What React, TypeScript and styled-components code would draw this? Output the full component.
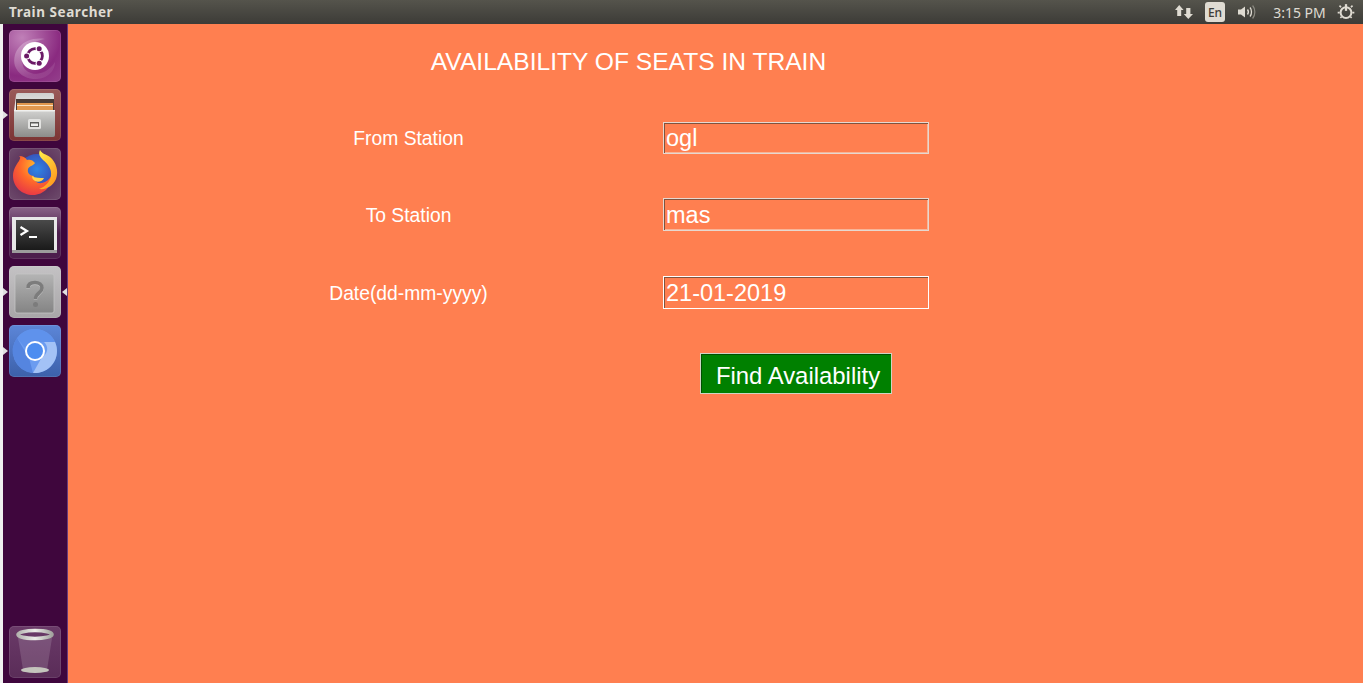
import styled, { createGlobalStyle } from "styled-components";
import type { ReactNode } from "react";

const GlobalStyle = createGlobalStyle`
  html, body {
    margin: 0;
    padding: 0;
    height: 100%;
    overflow: hidden;
    background: #ff7f50;
  }
  * { box-sizing: border-box; }
`;

const Screen = styled.div`
  width: 1363px;
  height: 683px;
  display: flex;
  flex-direction: column;
  font-family: "Liberation Sans", Arial, sans-serif;
`;

const TopBar = styled.header`
  height: 24px;
  flex: none;
  display: flex;
  align-items: center;
  justify-content: space-between;
  padding: 0 6px 0 9px;
  background: linear-gradient(#55544c, #3c3b37);
  color: #dfdbd2;
  font-family: "Noto Sans", "Open Sans", sans-serif;
`;

const WindowTitle = styled.span`
  font-size: 13.5px;
  font-weight: 700;
  letter-spacing: 0.55px;
`;

const Indicators = styled.div`
  display: flex;
  align-items: center;
`;

const Indicator = styled.span<{ $w: number }>`
  width: ${({ $w }) => $w}px;
  height: 24px;
  display: flex;
  align-items: center;
  justify-content: center;
  font-size: 14px;
`;

const LangBadge = styled.span`
  width: 20px;
  height: 20px;
  border-radius: 3px;
  background: #dfdbd2;
  color: #3c3b37;
  font-size: 12px;
  font-weight: 500;
  display: flex;
  align-items: center;
  justify-content: center;
`;

const Body = styled.div`
  flex: 1;
  display: flex;
  min-height: 0;
`;

const Edge = styled.div`
  width: 3px;
  background: #f0f0f0;
`;

const Launcher = styled.nav`
  width: 65px;
  background: #3f063d;
  border-right: 1px solid #6a3a7a;
  padding: 6px 6px 5px;
  display: flex;
  flex-direction: column;
  gap: 7px;
`;

const Tile = styled.div<{ $bg: string }>`
  position: relative;
  width: 52px;
  height: 52px;
  flex: none;
  border-radius: 5px;
  background: ${({ $bg }) => $bg};
  box-shadow: inset 0 0 0 1px rgba(255, 255, 255, 0.1);
  display: flex;
  align-items: center;
  justify-content: center;
`;

const BottomTile = styled(Tile)`
  margin-top: auto;
`;

const PipLeft = styled.i`
  position: absolute;
  left: -6px;
  top: 22px;
  border-style: solid;
  border-width: 4px 0 4px 5px;
  border-color: transparent transparent transparent #e0e0e0;
`;

const PipRight = styled.i`
  position: absolute;
  right: -6px;
  top: 22px;
  border-style: solid;
  border-width: 4px 5px 4px 0;
  border-color: transparent #e0e0e0 transparent transparent;
`;

const Main = styled.main`
  flex: 1;
  background: #ff7f50;
  padding: 0 0 0 85px;
  color: #fff;
`;

const Heading = styled.h1`
  width: 950px;
  margin: 0;
  padding: 24px 0 0 1px;
  height: 98px;
  font-size: 24.6px;
  line-height: 28px;
  font-weight: 400;
  text-align: center;
`;

const Form = styled.form`
  width: 950px;
  display: grid;
  grid-template-columns: 510px 266px;
  align-items: center;
`;

const FieldLabel = styled.label<{ $gap: number; $top: number }>`
  font-size: 19.3px;
  text-align: center;
  padding: ${({ $top }) => $top}px 0 0 1px;
  margin-bottom: ${({ $gap }) => $gap}px;
`;

const FieldInput = styled.input<{ $gap: number; $h: number; $active?: boolean }>`
  width: 266px;
  height: ${({ $h }) => $h}px;
  padding: ${({ $h }) => ($h > 32 ? "3px 2px 1px" : "1px 2px")};
  margin-bottom: ${({ $gap }) => $gap}px;
  font: 23.5px "Liberation Sans", Arial, sans-serif;
  color: #fff;
  background: transparent;
  border: 1px solid ${({ $active }) => ($active ? "#fff" : "#e6d8d0")};
  box-shadow: inset 1px 1px 0 #80533e,
    inset -1px -1px 0 ${({ $active }) => ($active ? "#ff7f50" : "#f8b497")};
  outline: none;
`;

const SubmitCell = styled.div`
  grid-column: 2;
  display: flex;
  justify-content: center;
`;

const SubmitButton = styled.button`
  width: 192px;
  height: 41px;
  padding: 4px 0 0 4px;
  font: 23.9px "Liberation Sans", Arial, sans-serif;
  color: #fff;
  background: #008000;
  border: 1px solid #cfd4c4;
  box-shadow: inset 1px 1px 0 #005000;
`;

const UbuntuIcon = () => (
  <svg width="52" height="52" viewBox="0 0 52 52">
    <defs>
      <linearGradient id="ubSwirl" x1="0" y1="0" x2="1" y2="1">
        <stop offset="0" stopColor="#fff" stopOpacity="0.3" />
        <stop offset="1" stopColor="#fff" stopOpacity="0.04" />
      </linearGradient>
    </defs>
    <path d="M6 36 C2 20 16 6 36 9 C22 11 11 22 14 36 C18 46 36 48 46 32 C46 44 34 50 24 49 C16 48 9 44 6 36 Z" fill="url(#ubSwirl)" />
    <circle cx="26" cy="26" r="14" fill="#fff" />
    <circle cx="26" cy="26" r="7.4" fill="none" stroke="#6b1a66" strokeWidth="2.8" />
    <circle cx="17.6" cy="26" r="3.6" fill="#fff" />
    <circle cx="30.2" cy="18.7" r="3.6" fill="#fff" />
    <circle cx="30.2" cy="33.3" r="3.6" fill="#fff" />
    <circle cx="17.6" cy="26" r="2.5" fill="#6b1a66" />
    <circle cx="30.2" cy="18.7" r="2.5" fill="#6b1a66" />
    <circle cx="30.2" cy="33.3" r="2.5" fill="#6b1a66" />
  </svg>
);

const FilesIcon = () => (
  <svg width="52" height="52" viewBox="0 0 52 52">
    <defs>
      <linearGradient id="drawer" x1="0" y1="0" x2="0" y2="1">
        <stop offset="0" stopColor="#d2d2d0" />
        <stop offset="1" stopColor="#8c8c8a" />
      </linearGradient>
      <linearGradient id="cabinetTop" x1="0" y1="0" x2="0" y2="1">
        <stop offset="0" stopColor="#cfcfcd" />
        <stop offset="1" stopColor="#f2f2f0" />
      </linearGradient>
    </defs>
    <path d="M7 6 Q7 4 9 4 H43 Q45 4 45 6 V22 H5 Z" fill="url(#cabinetTop)" />
    <rect x="7" y="10" width="38" height="12" fill="#4a3a34" />
    <rect x="8" y="14" width="36" height="8" fill="#e0974e" />
    <rect x="8" y="16" width="36" height="1" fill="#fbe2c2" />
    <rect x="5" y="21" width="41" height="27" rx="2" fill="url(#drawer)" />
    <rect x="5" y="21" width="41" height="1.5" fill="#f0f0ee" />
    <rect x="19" y="30" width="13" height="10" rx="1.5" fill="#e2e2e0" />
    <rect x="21" y="33" width="9" height="5" fill="#5e5e5c" />
    <rect x="22" y="34.5" width="7" height="2.5" fill="#f0f0ee" />
  </svg>
);

const FirefoxIcon = () => (
  <svg width="52" height="52" viewBox="0 0 52 52">
    <defs>
      <radialGradient id="fxBody" cx="0.6" cy="0.25" r="0.9">
        <stop offset="0" stopColor="#ffbd2e" />
        <stop offset="0.45" stopColor="#ff6a2a" />
        <stop offset="1" stopColor="#e0274f" />
      </radialGradient>
      <linearGradient id="fxTail" x1="0" y1="0" x2="0.6" y2="1">
        <stop offset="0" stopColor="#fff04a" />
        <stop offset="1" stopColor="#ff9a1f" />
      </linearGradient>
      <radialGradient id="fxGlobe" cx="0.5" cy="0.4" r="0.6">
        <stop offset="0" stopColor="#2f86e6" />
        <stop offset="1" stopColor="#3a3ea8" />
      </radialGradient>
    </defs>
    <circle cx="28" cy="25" r="19" fill="url(#fxGlobe)" />
    <path d="M10 13 C11 11 12 9 10 8 C14 8 17 10 18 12 C21 11 24 12 26 15 C24 18 20 18 19 21 C18 25 21 28 25 28 C24 31 27 36 33 35 C37 34 41 31 43 27 C43 38 35 47 24 47 C13 47 4 39 4 28 C4 22 7 17 10 13 Z" fill="url(#fxBody)" />
    <path d="M31 2 C29 6 31 9 34 12 C39 16 43 21 42 28 C41 34 36 39 30 41 C37 42 44 38 47 31 C50 23 47 14 41 9 C37 6 33 6 31 2 Z" fill="url(#fxTail)" />
    <path d="M23 28 C26 30 31 30 35 30 C34 33 29 35 26 33 C24 32 23 30 23 28 Z" fill="#ffd34a" />
  </svg>
);

const TerminalIcon = () => (
  <svg width="52" height="52" viewBox="0 0 52 52">
    <defs>
      <linearGradient id="termFace" x1="0" y1="0" x2="0" y2="1">
        <stop offset="0" stopColor="#4a4a4a" />
        <stop offset="1" stopColor="#1a1a1a" />
      </linearGradient>
    </defs>
    <rect x="3" y="10" width="45" height="36" fill="#e8e8e8" />
    <rect x="3" y="43" width="45" height="3" fill="#9c9c9c" />
    <rect x="7" y="13" width="38" height="30" fill="url(#termFace)" />
    <path d="M11.5 20 L18 24 L11.5 28" fill="none" stroke="#fff" strokeWidth="2.2" />
    <rect x="20" y="29" width="8" height="2" fill="#fff" />
  </svg>
);

const HelpIcon = () => (
  <svg width="52" height="52" viewBox="0 0 52 52">
    <defs>
      <linearGradient id="helpFace" x1="0" y1="0" x2="0" y2="1">
        <stop offset="0" stopColor="#b4b4b4" />
        <stop offset="1" stopColor="#848484" />
      </linearGradient>
    </defs>
    <rect x="6" y="8" width="39" height="39" rx="2" fill="url(#helpFace)" stroke="#c4c4c4" strokeWidth="0.8" />
    <path d="M19 22.6 C19 18.6 22 17.1 26 17.1 C30 17.1 33 19.1 33 22.6 C33 27.6 26.5 27.6 26.5 33.6" fill="none" stroke="#c0c0c0" strokeWidth="3.6" />
    <path d="M19 22 C19 18 22 16.5 26 16.5 C30 16.5 33 18.5 33 22 C33 27 26.5 27 26.5 33" fill="none" stroke="#7c7c7c" strokeWidth="3.6" />
    <circle cx="26.5" cy="38.5" r="2.5" fill="#7c7c7c" />
  </svg>
);

const ChromiumIcon = () => (
  <svg width="52" height="52" viewBox="0 0 52 52">
    <circle cx="26" cy="26" r="22" fill="#6b9cf0" />
    <path d="M26 4 A22 22 0 0 1 46 17 L26 17 A9 9 0 0 0 17 24 L8 13 A22 22 0 0 1 26 4 Z" fill="#5f92ec" />
    <path d="M46 17 A22 22 0 0 1 24 48 L33 32 A9 9 0 0 0 35 17 Z" fill="#a3c2f6" />
    <path d="M8 13 L20 33 L24 48 A22 22 0 0 1 8 13 Z" fill="#5585e0" />
    <circle cx="26" cy="26" r="10" fill="#fff" />
    <circle cx="26" cy="26" r="8" fill="#4d8df0" />
  </svg>
);

const TrashIcon = () => (
  <svg width="52" height="52" viewBox="0 0 52 52">
    <defs>
      <linearGradient id="rim" x1="0" y1="0" x2="1" y2="0">
        <stop offset="0" stopColor="#b4b4b0" />
        <stop offset="0.5" stopColor="#ecece8" />
        <stop offset="1" stopColor="#a4a4a0" />
      </linearGradient>
    </defs>
    <path d="M9 12 L14 44 L38 44 L43 12 Z" fill="#fff" fillOpacity="0.14" />
    <ellipse cx="26" cy="44" rx="14" ry="3" fill="#c4c4bc" />
    <ellipse cx="26" cy="8.5" rx="17" ry="4" fill="none" stroke="url(#rim)" strokeWidth="3.6" />
  </svg>
);

const TransferIcon = () => (
  <svg width="18" height="14" viewBox="0 0 18 14" fill="#dfdbd2">
    <path d="M4.2 0 L8.6 5 L6.2 5 L6.2 11 L2.2 11 L2.2 5 L0 5 Z" />
    <path d="M13.3 14 L18 9 L15.4 9 L15.4 3 L11.2 3 L11.2 9 L8.8 9 Z" />
  </svg>
);

const VolumeIcon = () => (
  <svg width="21" height="16" viewBox="0 0 21 16" fill="none">
    <path d="M1 5.5 H4 L8 2.5 V13.5 L4 10.5 H1 Z" fill="#dfdbd2" />
    <path d="M10.5 5.5 C11.6 7 11.6 9 10.5 10.5" stroke="#dfdbd2" strokeWidth="1.4" />
    <path d="M13 3.5 C15 6 15 10 13 12.5" stroke="#dfdbd2" strokeWidth="1.3" />
    <path d="M15.6 1.5 C18.6 5 18.6 11 15.6 14.5" stroke="#8b8980" strokeWidth="1.2" />
  </svg>
);

const SessionIcon = () => (
  <svg width="18" height="18" viewBox="0 0 16 16" fill="none" stroke="#dfdbd2">
    <circle cx="8" cy="8.5" r="4.8" strokeWidth="1.8" />
    <path d="M8 1 V7" strokeWidth="2" />
    <path d="M2.2 2.4 L3.6 3.8 M13.8 2.4 L12.4 3.8 M0.6 8.5 H2.4 M13.6 8.5 H15.4 M3 13.2 L4 12.2 M13 13.2 L12 12.2" strokeWidth="1.5" />
  </svg>
);

type LauncherItem = {
  bg: string;
  icon: ReactNode;
  left?: boolean;
  right?: boolean;
};

const launcherItems: LauncherItem[] = [
  {
    bg: "radial-gradient(circle at 25% 15%, #c080b8, #8a2a80 65%, #94408c)",
    icon: <UbuntuIcon />,
  },
  {
    bg: "linear-gradient(#9a5a58, #7c3434)",
    icon: <FilesIcon />,
    left: true,
  },
  {
    bg: "radial-gradient(circle at 50% 50%, #4e1c4c, #6e4c6c)",
    icon: <FirefoxIcon />,
  },
  {
    bg: "linear-gradient(#8a6488, #4c1e4c 50%, #4c1e4c)",
    icon: <TerminalIcon />,
  },
  {
    bg: "linear-gradient(#c4c2c4, #a8a6a8)",
    icon: <HelpIcon />,
    left: true,
    right: true,
  },
  {
    bg: "linear-gradient(#5c86d8, #3c60aa)",
    icon: <ChromiumIcon />,
    left: true,
  },
];

export default function App() {
  return (
    <Screen>
      <GlobalStyle />
      <TopBar>
        <WindowTitle>Train Searcher</WindowTitle>
        <Indicators>
          <Indicator $w={31}>
            <TransferIcon />
          </Indicator>
          <Indicator $w={32}>
            <LangBadge>En</LangBadge>
          </Indicator>
          <Indicator $w={33}>
            <VolumeIcon />
          </Indicator>
          <Indicator $w={71}>3:15 PM</Indicator>
          <Indicator $w={22}>
            <SessionIcon />
          </Indicator>
        </Indicators>
      </TopBar>
      <Body>
        <Edge />
        <Launcher>
          {launcherItems.map((item, i) => (
            <Tile key={i} $bg={item.bg}>
              {item.icon}
              {item.left && <PipLeft />}
              {item.right && <PipRight />}
            </Tile>
          ))}
          <BottomTile $bg="linear-gradient(#6a3a68, #5a2c58)">
            <TrashIcon />
          </BottomTile>
        </Launcher>
        <Main>
          <Heading>AVAILABILITY OF SEATS IN TRAIN</Heading>
          <Form>
            <FieldLabel $gap={44} $top={1}>From Station</FieldLabel>
            <FieldInput $gap={44} $h={32} defaultValue="ogl" />
            <FieldLabel $gap={45} $top={3}>To Station</FieldLabel>
            <FieldInput $gap={45} $h={33} defaultValue="mas" />
            <FieldLabel $gap={44} $top={3}>Date(dd-mm-yyyy)</FieldLabel>
            <FieldInput $gap={44} $h={33} $active defaultValue="21-01-2019" />
            <SubmitCell>
              <SubmitButton type="button">Find Availability</SubmitButton>
            </SubmitCell>
          </Form>
        </Main>
      </Body>
    </Screen>
  );
}
